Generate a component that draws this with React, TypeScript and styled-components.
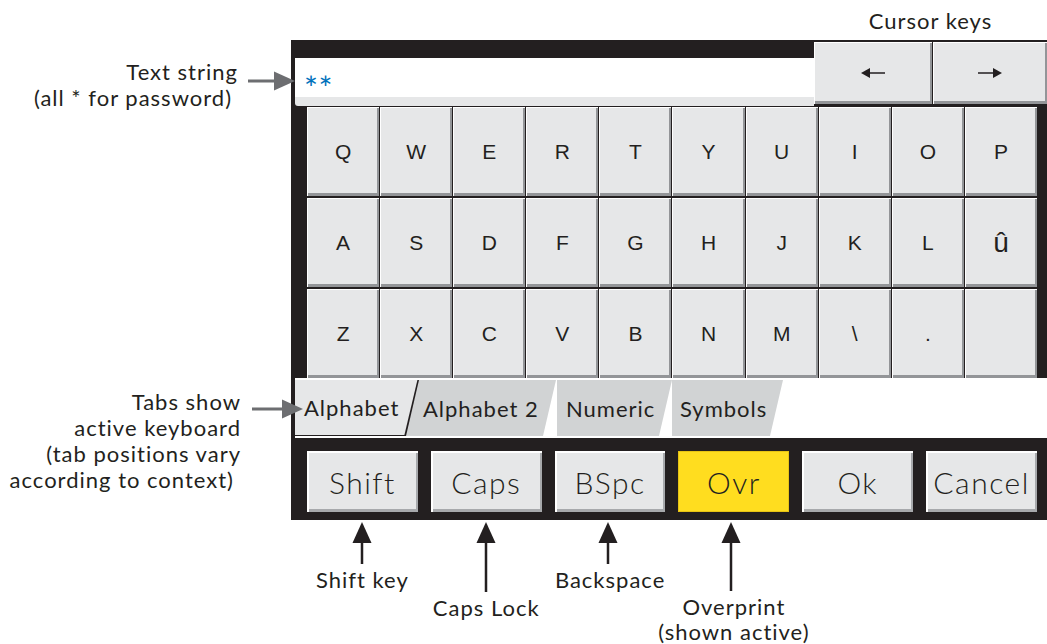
import React from "react";
import styled, { createGlobalStyle } from "styled-components";

const INK = "#231f20";
const KEY = "#e6e7e8";
const SHADE = "#939598";
const NOTE_GREY = "#6d6e71";

const GlobalStyle = createGlobalStyle`
  html, body { margin: 0; padding: 0; background: #ffffff; }
  body { font-family: Lato, "Liberation Sans", sans-serif; color: ${INK}; }
`;

const Page = styled.div`
  width: 1047px;
  height: 644px;
  overflow: hidden;
  display: grid;
  grid-template-columns: 291px 756px;
  grid-template-rows: 40px 480px 124px;
`;

const Caption = styled.div`
  font-family: Lato, "Liberation Sans", sans-serif;
  font-weight: 400;
  font-size: 22px;
  line-height: 26px;
  letter-spacing: 1px;
  color: ${INK};
  white-space: nowrap;
`;

const Header = styled.div`
  grid-column: 2;
  grid-row: 1;
  display: flex;
  justify-content: flex-end;
`;

const CursorCaption = styled(Caption)`
  width: 233px;
  text-align: center;
  padding-top: 8px;
`;

const LeftNotes = styled.div`
  grid-column: 1;
  grid-row: 2;
  display: flex;
  flex-direction: column;
  position: relative;
  z-index: 1;
`;

const NoteRow = styled.div<{ $top: number; $overhang: number }>`
  display: flex;
  justify-content: flex-end;
  align-items: flex-start;
  margin-top: ${(p) => p.$top}px;
  margin-right: -${(p) => p.$overhang}px;
`;

const NoteText = styled.div`
  display: flex;
  flex-direction: column;
  align-items: flex-end;
`;

const NoteLine = styled(Caption)<{ $inset?: number }>`
  padding-right: ${(p) => p.$inset ?? 0}px;
`;

const SideArrowSvg = styled.svg<{ $gap: number; $drop: number }>`
  flex: none;
  margin-left: ${(p) => p.$gap}px;
  margin-top: ${(p) => p.$drop}px;
`;

const Frame = styled.div`
  grid-column: 2;
  grid-row: 2;
  background: ${INK};
  display: flex;
  flex-direction: column;
  padding-left: 4px;
`;

const TopRow = styled.div`
  display: flex;
  height: 66px;
`;

const TextBox = styled.div`
  flex: 1;
  margin-top: 18px;
  display: flex;
  flex-direction: column;
`;

const Field = styled.div`
  height: 39px;
  box-sizing: border-box;
  background: #ffffff;
  padding: 19px 0 0 9px;
  display: flex;
  align-items: center;
  font-family: Lato, "Liberation Sans", sans-serif;
  font-size: 33px;
  letter-spacing: 0.5px;
  color: #0072bc;
`;

const FieldStrip = styled.div`
  height: 9px;
  background: ${KEY};
  border-bottom-left-radius: 3px;
`;

const CursorKeys = styled.div`
  display: flex;
  gap: 1px;
  padding-top: 2px;
  width: 233px;
`;

const CursorKey = styled.div<{ $w: number }>`
  width: ${(p) => p.$w}px;
  height: 62px;
  background: ${KEY};
  box-shadow: inset 1px 1px 0 #ffffff, inset -2px -3px 0 ${SHADE};
  display: flex;
  align-items: center;
  justify-content: center;
`;

const KeyArea = styled.div`
  height: 272px;
  box-sizing: border-box;
  padding: 1px 10px 0 12px;
  display: grid;
  grid-template-columns: repeat(10, 1fr);
  grid-auto-rows: 89px;
  column-gap: 1px;
  row-gap: 2px;
`;

const Key = styled.div<{ $big?: boolean }>`
  background: ${KEY};
  box-shadow: inset 1px 1px 0 #ffffff, inset -2px -3px 0 ${SHADE};
  display: flex;
  align-items: center;
  justify-content: center;
  font-family: "Liberation Sans", Arial, sans-serif;
  font-size: ${(p) => (p.$big ? 28 : 21)}px;
  color: ${INK};
`;

const TabsRow = styled.div`
  height: 60px;
  box-sizing: border-box;
  padding-top: 2px;
  background: #ffffff;
  display: flex;
  align-items: flex-start;
`;

const TabShape = styled.div<{ $w: number; $ml: number; $active?: boolean }>`
  position: relative;
  z-index: ${(p) => (p.$active ? 1 : 0)};
  flex: none;
  width: ${(p) => p.$w}px;
  height: 56px;
  margin-left: ${(p) => p.$ml}px;
  clip-path: polygon(0 0, 100% 0, calc(100% - 13px) 100%, 0 100%);
  background: ${(p) => (p.$active ? INK : "#d1d3d4")};
`;

const TabFace = styled.div<{ $active?: boolean; $pl: number }>`
  height: ${(p) => (p.$active ? "55px" : "56px")};
  clip-path: ${(p) =>
    p.$active
      ? "polygon(0 0, calc(100% - 1.6px) 0, calc(100% - 14.6px) 100%, 0 100%)"
      : "none"};
  background: ${(p) => (p.$active ? KEY : "transparent")};
  display: flex;
  align-items: center;
  padding-left: ${(p) => p.$pl}px;
  font-family: Lato, "Liberation Sans", sans-serif;
  font-weight: 400;
  font-size: 22px;
  letter-spacing: 1px;
  color: ${INK};
  white-space: nowrap;
`;

const BottomBar = styled.div`
  height: 82px;
  box-sizing: border-box;
  padding: 13px 10px 0 12px;
  display: flex;
  gap: 13px;
`;

const BarButton = styled.div<{ $on?: boolean }>`
  flex: 1;
  height: 61px;
  background: ${(p) => (p.$on ? "#ffdd1f" : KEY)};
  box-shadow: ${(p) =>
    p.$on
      ? "inset 0 0 0 1px #e8c414"
      : `inset 2px 2px 0 #ffffff, inset -2px -3px 0 #a7a9ac`};
  display: flex;
  align-items: center;
  justify-content: center;
  font-family: Lato, "Liberation Sans", sans-serif;
  font-weight: 300;
  font-size: 30px;
  letter-spacing: 1.5px;
  color: ${INK};
  white-space: nowrap;
`;

const BottomNotes = styled.div`
  grid-column: 2;
  grid-row: 3;
  display: flex;
  gap: 13px;
  padding: 0 10px 0 16px;
`;

const BottomCol = styled.div`
  flex: 1 1 0;
  min-width: 0;
  display: flex;
  flex-direction: column;
  align-items: center;
`;

const BottomLabel = styled(Caption)`
  margin-top: 3px;
  text-align: center;
  & + & {
    margin-top: -1px;
  }
`;

const SideArrow: React.FC<{ w: number; gap: number; drop: number }> = ({ w, gap, drop }) => (
  <SideArrowSvg $gap={gap} $drop={drop} width={w} height={20} viewBox={`0 0 ${w} 20`}>
    <rect x={0} y={8.5} width={w - 19} height={3} fill={NOTE_GREY} />
    <polygon points={`${w - 21},0.5 ${w},10 ${w - 21},19.5`} fill={NOTE_GREY} />
  </SideArrowSvg>
);

const UpArrow: React.FC<{ h: number; shift: number }> = ({ h, shift }) => (
  <svg
    width={20}
    height={h}
    viewBox={`0 0 20 ${h}`}
    style={{ flex: "none", transform: `translateX(${shift}px)` }}
  >
    <polygon points="10,2 19.5,23 0.5,23" fill={INK} />
    <rect x={8.75} y={22} width={2.5} height={h - 22} fill={INK} />
  </svg>
);

const CursorArrow: React.FC<{ dir: "left" | "right" }> = ({ dir }) => (
  <svg
    width={24}
    height={12}
    viewBox="0 0 24 12"
    style={{ transform: dir === "right" ? "scaleX(-1)" : undefined }}
  >
    <polygon points="0,6 9,1 9,11" fill={INK} />
    <rect x={8} y={5.25} width={16} height={1.5} fill={INK} />
  </svg>
);

const rows = [
  ["Q", "W", "E", "R", "T", "Y", "U", "I", "O", "P"],
  ["A", "S", "D", "F", "G", "H", "J", "K", "L", "û"],
  ["Z", "X", "C", "V", "B", "N", "M", "\\", ".", ""],
];

const tabs = [
  { label: "Alphabet", w: 124, ml: 0, pl: 9, active: true },
  { label: "Alphabet 2", w: 150, ml: -13, pl: 17 },
  { label: "Numeric", w: 115, ml: 1, pl: 9 },
  { label: "Symbols", w: 111, ml: 0, pl: 8 },
];

const buttons = [
  { label: "Shift", note: ["Shift key"], arrow: 44, shift: 0 },
  { label: "Caps", note: ["Caps Lock"], arrow: 72, shift: 0 },
  { label: "BSpc", note: ["Backspace"], arrow: 44, shift: -2 },
  { label: "Ovr", note: ["Overprint", "(shown active)"], arrow: 71, shift: -3, on: true },
  { label: "Ok" },
  { label: "Cancel" },
];

export default function App() {
  return (
    <>
      <GlobalStyle />
      <Page>
        <Header>
          <CursorCaption>Cursor keys</CursorCaption>
        </Header>

        <Frame>
          <TopRow>
            <TextBox>
              <Field>**</Field>
              <FieldStrip />
            </TextBox>
            <CursorKeys>
              <CursorKey $w={118}>
                <CursorArrow dir="left" />
              </CursorKey>
              <CursorKey $w={114}>
                <CursorArrow dir="right" />
              </CursorKey>
            </CursorKeys>
          </TopRow>

          <KeyArea>
            {rows.flat().map((k, i) => (
              <Key key={i} $big={k === "û"}>
                {k}
              </Key>
            ))}
          </KeyArea>

          <TabsRow>
            {tabs.map((t) => (
              <TabShape key={t.label} $w={t.w} $ml={t.ml} $active={t.active}>
                <TabFace $active={t.active} $pl={t.pl}>
                  {t.label}
                </TabFace>
              </TabShape>
            ))}
          </TabsRow>

          <BottomBar>
            {buttons.map((b) => (
              <BarButton key={b.label} $on={b.on}>
                {b.label}
              </BarButton>
            ))}
          </BottomBar>
        </Frame>

        <LeftNotes>
          <NoteRow $top={19} $overhang={4}>
            <NoteText>
              <NoteLine>Text string</NoteLine>
              <NoteLine $inset={6}>(all * for password)</NoteLine>
            </NoteText>
            <SideArrow w={47} gap={10} drop={12} />
          </NoteRow>
          <NoteRow $top={278} $overhang={12}>
            <NoteText>
              <NoteLine>Tabs show</NoteLine>
              <NoteLine>active keyboard</NoteLine>
              <NoteLine>(tab positions vary</NoteLine>
              <NoteLine $inset={7}>according to context)</NoteLine>
            </NoteText>
            <SideArrow w={51} gap={11} drop={10} />
          </NoteRow>
        </LeftNotes>

        <BottomNotes>
          {buttons.map((b) => (
            <BottomCol key={b.label}>
              {b.note && (
                <>
                  <UpArrow h={b.arrow as number} shift={b.shift as number} />
                  {b.note.map((line) => (
                    <BottomLabel key={line}>{line}</BottomLabel>
                  ))}
                </>
              )}
            </BottomCol>
          ))}
        </BottomNotes>
      </Page>
    </>
  );
}
